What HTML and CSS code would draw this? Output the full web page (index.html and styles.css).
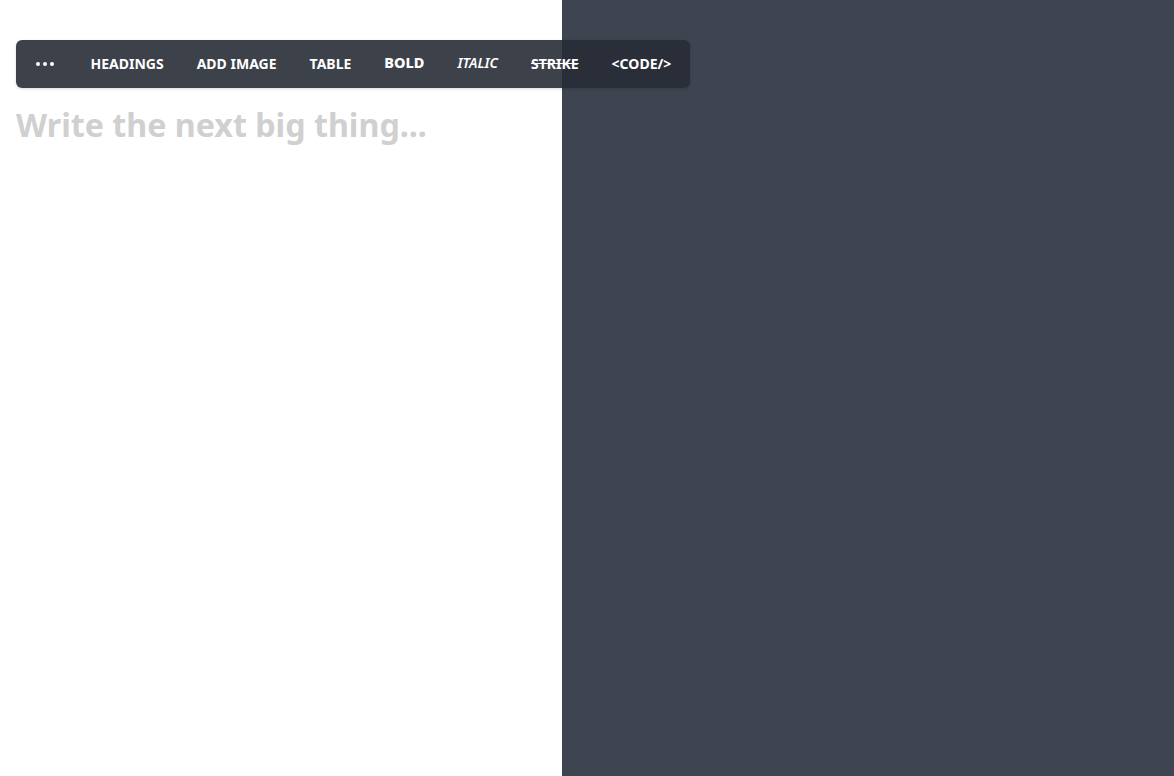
FILE: index.html
```html
<!DOCTYPE html>
<html lang="en">
<head>
<meta charset="UTF-8" />
<meta name="viewport" content="width=device-width, initial-scale=1.0" />
<title>Editor</title>
<link rel="stylesheet" href="styles.css">
</head>
<body>
<div class="layout">
  <div class="editor">
    <div class="toolbar">
      <button class="tool more"><span></span><span></span><span></span></button>
      <button class="tool">HEADINGS</button>
      <button class="tool">ADD IMAGE</button>
      <button class="tool">TABLE</button>
      <button class="tool bold">BOLD</button>
      <button class="tool italic">ITALIC</button>
      <button class="tool strike">STRIKE</button>
      <button class="tool">&lt;CODE/&gt;</button>
    </div>
    <div class="input" contenteditable="true" data-placeholder="Write the next big thing..."></div>
  </div>
  <div class="preview"></div>
</div>
</body>
</html>
```
FILE: styles.css
```css
body{margin:0;padding:0;font-family:"Noto Sans",sans-serif;background:#fff;}
.layout{display:flex;height:100vh;}
.editor{width:562px;position:relative;padding:88px 16px 0;box-sizing:border-box;}
.preview{flex:1;background:#3f4451;}
.toolbar{position:absolute;left:16px;top:40px;height:48px;display:flex;align-items:center;padding:0 2px 0 1px;background:rgba(40,44,54,0.9);border-radius:6px;box-shadow:0 1px 3px rgba(0,0,0,0.15);z-index:2;}
.tool{background:none;border:none;color:#fff;font-family:"Noto Sans",sans-serif;font-size:14px;font-weight:700;padding:0 16.5px 2px;height:48px;cursor:pointer;white-space:nowrap;}
.tool.bold{font-weight:800;font-size:14.5px;padding-bottom:4px;}
.tool.italic{font-style:italic;font-weight:600;padding-bottom:4px;}
.tool.strike{text-decoration:line-through;}
.more{display:flex;align-items:center;gap:3px;padding:0 20px 0 19px;}
.more span{width:4px;height:4px;border-radius:50%;background:#fff;display:block;}
.input{font-size:32.2px;font-weight:700;color:#d0d0d0;line-height:1.2;padding-top:18px;outline:none;}
.input:empty:before{content:attr(data-placeholder);}
```
